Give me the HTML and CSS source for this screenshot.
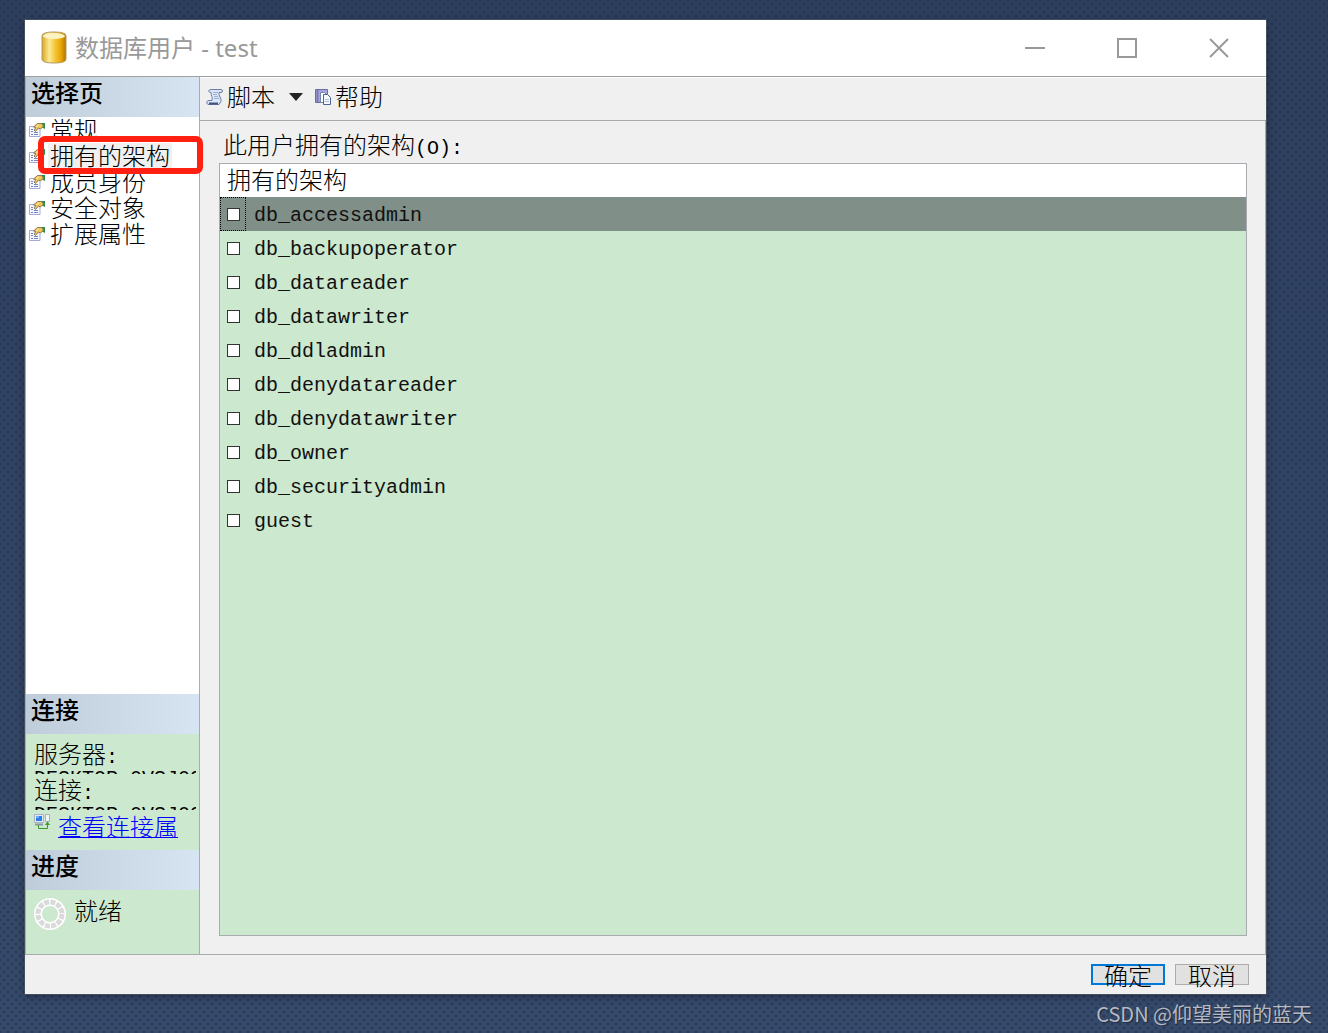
FILE: index.html
```
<!DOCTYPE html>
<html lang="zh-CN">
<head>
    <meta charset="UTF-8">
    <meta name="viewport" content="width=device-width, initial-scale=1.0">
    <title>数据库用户 - test</title>
    <link rel="stylesheet" href="styles.css">
</head>
<body>
    <svg class="sprite" aria-hidden="true">
        <symbol id="icon-page" viewBox="0 0 16 16">
            <path d="M.5 4.500h10.500v10h-10.500z" fill="#f6f8ff" stroke="#a3abd6"/>
            <path d="M2 7.500h2M2 9.500h2M2 12.500h2M5 12.500h4M5 10.500h4" stroke="#7585c4"/>
            <path d="M12 1h4v6l-4-2z" fill="#2f8a4c"/>
            <path d="M4.500 5l4-3.500h4l2 2.500-3 3-2-1-3 3.500-1.500-1.500 2-2.500z" fill="#f5c451" stroke="#8d7a4d"/>
            <path d="M7 5l3-2" stroke="#fff0b0"/>
        </symbol>
    </svg>

    <div class="window">
        <header class="titlebar">
            <svg class="db-icon" width="26" height="34" viewBox="0 0 26 34">
                <defs>
                    <linearGradient id="gold">
                        <stop offset="0" stop-color="#d9a520"/>
                        <stop offset=".3" stop-color="#fbea94"/>
                        <stop offset=".55" stop-color="#f3c63a"/>
                        <stop offset=".8" stop-color="#e8a300"/>
                        <stop offset="1" stop-color="#a8720a"/>
                    </linearGradient>
                </defs>
                <path d="M1 5c0-3 5-4 12-4s12 1 12 4v23c0 3-5 4-12 4S1 31 1 28z" fill="url(#gold)" stroke="#b39a68"/>
                <ellipse cx="13" cy="5" rx="11" ry="3" fill="#fbf3c0"/>
            </svg>
            <h1>数据库用户 - test</h1>
            <div class="window-buttons">
                <button type="button" aria-label="最小化"><svg width="20" height="20"><path d="M0 10h20" stroke="#999" stroke-width="2"/></svg></button>
                <button type="button" aria-label="最大化"><svg width="20" height="20"><path d="M1 1h18v18H1z" fill="none" stroke="#999" stroke-width="2"/></svg></button>
                <button type="button" aria-label="关闭"><svg width="20" height="20"><path d="M1 1l18 18M19 1L1 19" stroke="#999" stroke-width="2"/></svg></button>
            </div>
        </header>

        <div class="content">
            <aside class="sidebar">
                <h2>选择页</h2>
                <nav>
                    <a href="#"><svg width="16" height="16"><use href="#icon-page"/></svg><span>常规</span></a>
                    <a href="#" class="active"><svg width="16" height="16"><use href="#icon-page"/></svg><span>拥有的架构</span></a>
                    <a href="#"><svg width="16" height="16"><use href="#icon-page"/></svg><span>成员身份</span></a>
                    <a href="#"><svg width="16" height="16"><use href="#icon-page"/></svg><span>安全对象</span></a>
                    <a href="#"><svg width="16" height="16"><use href="#icon-page"/></svg><span>扩展属性</span></a>
                    <div class="marker"></div>
                </nav>
                <h2>连接</h2>
                <div class="connection">
                    <dl>
                        <dt>服务器<span class="mono">:</span></dt>
                        <dd>DESKTOP-0VSJ09</dd>
                    </dl>
                    <dl>
                        <dt>连接<span class="mono">:</span></dt>
                        <dd>DESKTOP-0VSJ09</dd>
                    </dl>
                    <div class="view-link">
                        <svg width="16" height="16" viewBox="0 0 16 16">
                            <path d="M.5.500h9v8h-9z" fill="#e5e9f4" stroke="#a9b0c4"/>
                            <path d="M2 2h6v5H2z" fill="#2b7de9"/>
                            <path d="M2 2h3v2H2z" fill="#68b1ff"/>
                            <path d="M1 10.500h8" stroke="#8e96ac" stroke-width="2"/>
                            <path d="M11.500.500h4v7h-4z" fill="#f3f3f6" stroke="#a9b0c4"/>
                            <path d="M4.500 11v3.500h9V9" fill="none" stroke="#3c9a28"/>
                            <path d="M11 11l2.500-3.500L16 11z" fill="#3c9a28"/>
                        </svg>
                        <a href="#">查看连接属</a>
                    </div>
                </div>
                <h2>进度</h2>
                <div class="progress">
                    <svg width="32" height="32" viewBox="0 0 32 32">
                        <circle cx="16" cy="16" r="12" fill="none" stroke="#fff" stroke-width="8"/>
                        <circle cx="16" cy="16" r="12" fill="none" stroke="#dadada" stroke-width="5" stroke-dasharray="5 1.283"/>
                    </svg>
                    <span>就绪</span>
                </div>
            </aside>

            <main class="main">
                <div class="toolbar">
                    <button type="button">
                        <svg width="18" height="18" viewBox="0 0 18 18">
                            <path d="M5 1.500h10c2 0 2 3 0 3h-2c-1 3 3 6 2 9l-2 3H3c-3 0-3-4 0-4h3c1-3-1-5-1-8-3 0-3-3 0-3z" fill="#dbe6fb" stroke="#6a7ca4"/>
                            <path d="M7 4.500h5M7 6.500h4M8 8.500h4M8 10.500h5" fill="none" stroke="#9db0d8"/>
                            <path d="M3 15.500h9" stroke="#3f537c" stroke-width="2"/>
                        </svg>
                        <span>脚本</span>
                        <svg class="arrow" width="14" height="8"><path d="M0 0h14L7 8z" fill="#222"/></svg>
                    </button>
                    <button type="button">
                        <svg width="18" height="18" viewBox="0 0 18 18">
                            <path d="M1.500 1.500h12v13h-12z" fill="#a9a5dc" stroke="#6f6bab"/>
                            <path d="M3.500 2v12" stroke="#7a76b8" stroke-width="2"/>
                            <path d="M6.500 4.500h4l2 2v8h-6z" fill="#fff" stroke="#6f84ad"/>
                            <path d="M9.500 6.500h4l3 3v7h-7z" fill="#f4f8ff" stroke="#4e658d"/>
                            <path d="M11 11.500h4M11 13.500h4" stroke="#a9bbdd"/>
                        </svg>
                        <span>帮助</span>
                    </button>
                </div>

                <div class="panel">
                    <p id="schemas-label">此用户拥有的架构<span class="mono">(O):</span></p>
                    <div class="list">
                        <table aria-labelledby="schemas-label">
                            <thead>
                                <tr><th colspan="2">拥有的架构</th></tr>
                            </thead>
                            <tbody>
                                <tr class="selected"><td><input type="checkbox" id="s1"></td><td><label for="s1">db_accessadmin</label></td></tr>
                                <tr><td><input type="checkbox" id="s2"></td><td><label for="s2">db_backupoperator</label></td></tr>
                                <tr><td><input type="checkbox" id="s3"></td><td><label for="s3">db_datareader</label></td></tr>
                                <tr><td><input type="checkbox" id="s4"></td><td><label for="s4">db_datawriter</label></td></tr>
                                <tr><td><input type="checkbox" id="s5"></td><td><label for="s5">db_ddladmin</label></td></tr>
                                <tr><td><input type="checkbox" id="s6"></td><td><label for="s6">db_denydatareader</label></td></tr>
                                <tr><td><input type="checkbox" id="s7"></td><td><label for="s7">db_denydatawriter</label></td></tr>
                                <tr><td><input type="checkbox" id="s8"></td><td><label for="s8">db_owner</label></td></tr>
                                <tr><td><input type="checkbox" id="s9"></td><td><label for="s9">db_securityadmin</label></td></tr>
                                <tr><td><input type="checkbox" id="s10"></td><td><label for="s10">guest</label></td></tr>
                            </tbody>
                        </table>
                    </div>
                </div>
            </main>
        </div>

        <footer class="footer">
            <button type="button" class="default">确定</button>
            <button type="button">取消</button>
        </footer>
    </div>
    <p class="watermark">CSDN @仰望美丽的蓝天</p>
</body>
</html>
```
FILE: styles.css
```
* {
    box-sizing: border-box;
}

body {
    margin: 0;
    padding: 20px 62px 0 25px;
    min-height: 100vh;
    display: flex;
    flex-direction: column;
    font-family: "Noto Sans CJK SC", sans-serif;
    font-size: 24px;
    font-weight: 300;
    color: #000;
    background-image:
        radial-gradient(circle, rgba(30, 42, 68, 0.45) 1px, transparent 2px),
        radial-gradient(circle, rgba(30, 42, 68, 0.45) 1px, transparent 2px),
        linear-gradient(#2e3f5e, #364a6b);
    background-size: 8px 8px, 8px 8px, 100% 100%;
    background-position: 0 0, 4px 4px, 0 0;
}

h1, h2, p, dl, dd {
    margin: 0;
}

button {
    font: inherit;
    color: inherit;
    padding: 0;
    border: none;
    background: none;
}

svg {
    flex: none;
}

.sprite {
    position: absolute;
    width: 0;
    height: 0;
}

.mono {
    font-family: "Liberation Mono", monospace;
    font-size: 20px;
}

.window {
    flex: 1;
    display: flex;
    flex-direction: column;
    background-color: #f0f0f0;
    box-shadow: 0 0 0 1px #45505f, 0 2px 8px rgba(0, 0, 0, 0.4);
}

/* title bar */
.titlebar {
    height: 57px;
    display: flex;
    align-items: center;
    padding-left: 16px;
    background-color: #fff;
    border-bottom: 1px solid #a0a0a0;
}

.titlebar h1 {
    flex: 1;
    margin-left: 8px;
    font-family: "Noto Sans", "Noto Sans CJK SC", sans-serif;
    font-size: 24px;
    font-weight: 400;
    line-height: 32px;
    color: #999;
}

.window-buttons {
    display: flex;
    margin-right: 1px;
}

.window-buttons button {
    width: 92px;
    height: 54px;
    display: flex;
    align-items: center;
    justify-content: center;
}

/* left column */
.content {
    flex: 1;
    display: flex;
}

.sidebar {
    width: 175px;
    flex: none;
    display: flex;
    flex-direction: column;
    background-color: #fff;
    border-left: 1px solid #a9abb0;
    border-right: 1px solid #a9abb0;
}

.sidebar h2 {
    height: 40px;
    padding-left: 5px;
    font-size: 24px;
    font-weight: 500;
    line-height: 30px;
    background: linear-gradient(to right, #bfccda, #d7e4f2);
}

nav {
    flex: 1;
    position: relative;
}

nav a {
    height: 26px;
    display: flex;
    align-items: center;
    gap: 3px;
    padding-left: 3px;
    color: #000;
    text-decoration: none;
}

nav span {
    height: 26px;
    padding: 0 2px;
    line-height: 24px;
}

nav .active span {
    background-color: #f0f0f0;
}

.marker {
    position: absolute;
    top: 19px;
    left: 12px;
    width: 165px;
    height: 38px;
    border: 6px solid #ff2012;
    border-radius: 7px;
}

.connection {
    height: 116px;
    padding: 4px 3px 0 8px;
    background-color: #cce8cf;
}

.connection dl {
    height: 36px;
    overflow: hidden;
}

.connection dt {
    height: 32px;
    line-height: 30px;
}

.connection dd {
    overflow: hidden;
    font-family: "Liberation Mono", monospace;
    font-size: 20px;
    line-height: 18px;
    white-space: nowrap;
}

.view-link {
    display: flex;
    gap: 8px;
    padding-top: 4px;
}

.view-link a {
    line-height: 24px;
    color: #0000ff;
    text-decoration-thickness: 1px;
}

.progress {
    height: 64px;
    display: flex;
    align-items: flex-start;
    gap: 8px;
    padding: 8px;
    background-color: #cce8cf;
}

.progress span {
    line-height: 24px;
}

/* right side */
.main {
    flex: 1;
    display: flex;
    flex-direction: column;
}

.toolbar {
    height: 44px;
    display: flex;
    padding-left: 6px;
    gap: 11px;
    border-top: 1px solid #fff;
    border-bottom: 1px solid #a9abb0;
}

.toolbar button {
    height: 38px;
    display: flex;
    align-items: center;
    gap: 3px;
}

.toolbar span {
    height: 38px;
    line-height: 36px;
}

.toolbar .arrow {
    margin-left: 11px;
}

.panel {
    flex: 1;
    display: flex;
    flex-direction: column;
    padding: 8px 18px 18px 19px;
    border-right: 1px solid #a9abb0;
}

.panel p {
    height: 34px;
    padding-left: 4px;
    line-height: 30px;
}

.list {
    flex: 1;
    background-color: #cce8cf;
    border: 1px solid #a9abb0;
}

table {
    width: 100%;
    border-collapse: collapse;
}

th {
    height: 33px;
    padding: 0 7px 3px;
    font-weight: 300;
    line-height: 30px;
    text-align: left;
    background-color: #fff;
}

td {
    height: 34px;
    padding: 4px 8px 0;
    font-family: "Liberation Mono", monospace;
    font-size: 20px;
    line-height: 30px;
    color: #111;
}

td:first-child {
    width: 26px;
    padding: 0 0 0 7px;
}

td input {
    appearance: none;
    display: block;
    width: 13px;
    height: 13px;
    margin: 0;
    background-color: #fff;
    border: 1px solid #333;
}

.selected {
    background-color: #808f87;
}

.selected td:first-child {
    outline: 1px dotted #000;
    outline-offset: -1px;
}

/* bottom buttons */
.footer {
    height: 40px;
    display: flex;
    gap: 10px;
    justify-content: flex-end;
    padding: 9px 17px 0 0;
    border-top: 1px solid #a9abb0;
}

.footer button {
    width: 74px;
    height: 21px;
    line-height: 16px;
    background-color: #e1e1e1;
    border: 1px solid #adadad;
}

.footer .default {
    border: 2px solid #0078d7;
}

.watermark {
    height: 39px;
    margin-right: -46px;
    font-size: 20px;
    font-weight: 400;
    line-height: 39px;
    text-align: right;
    color: #b4bac5;
    text-shadow: 1px 1px 1px rgba(0, 0, 0, 0.4);
}
```
